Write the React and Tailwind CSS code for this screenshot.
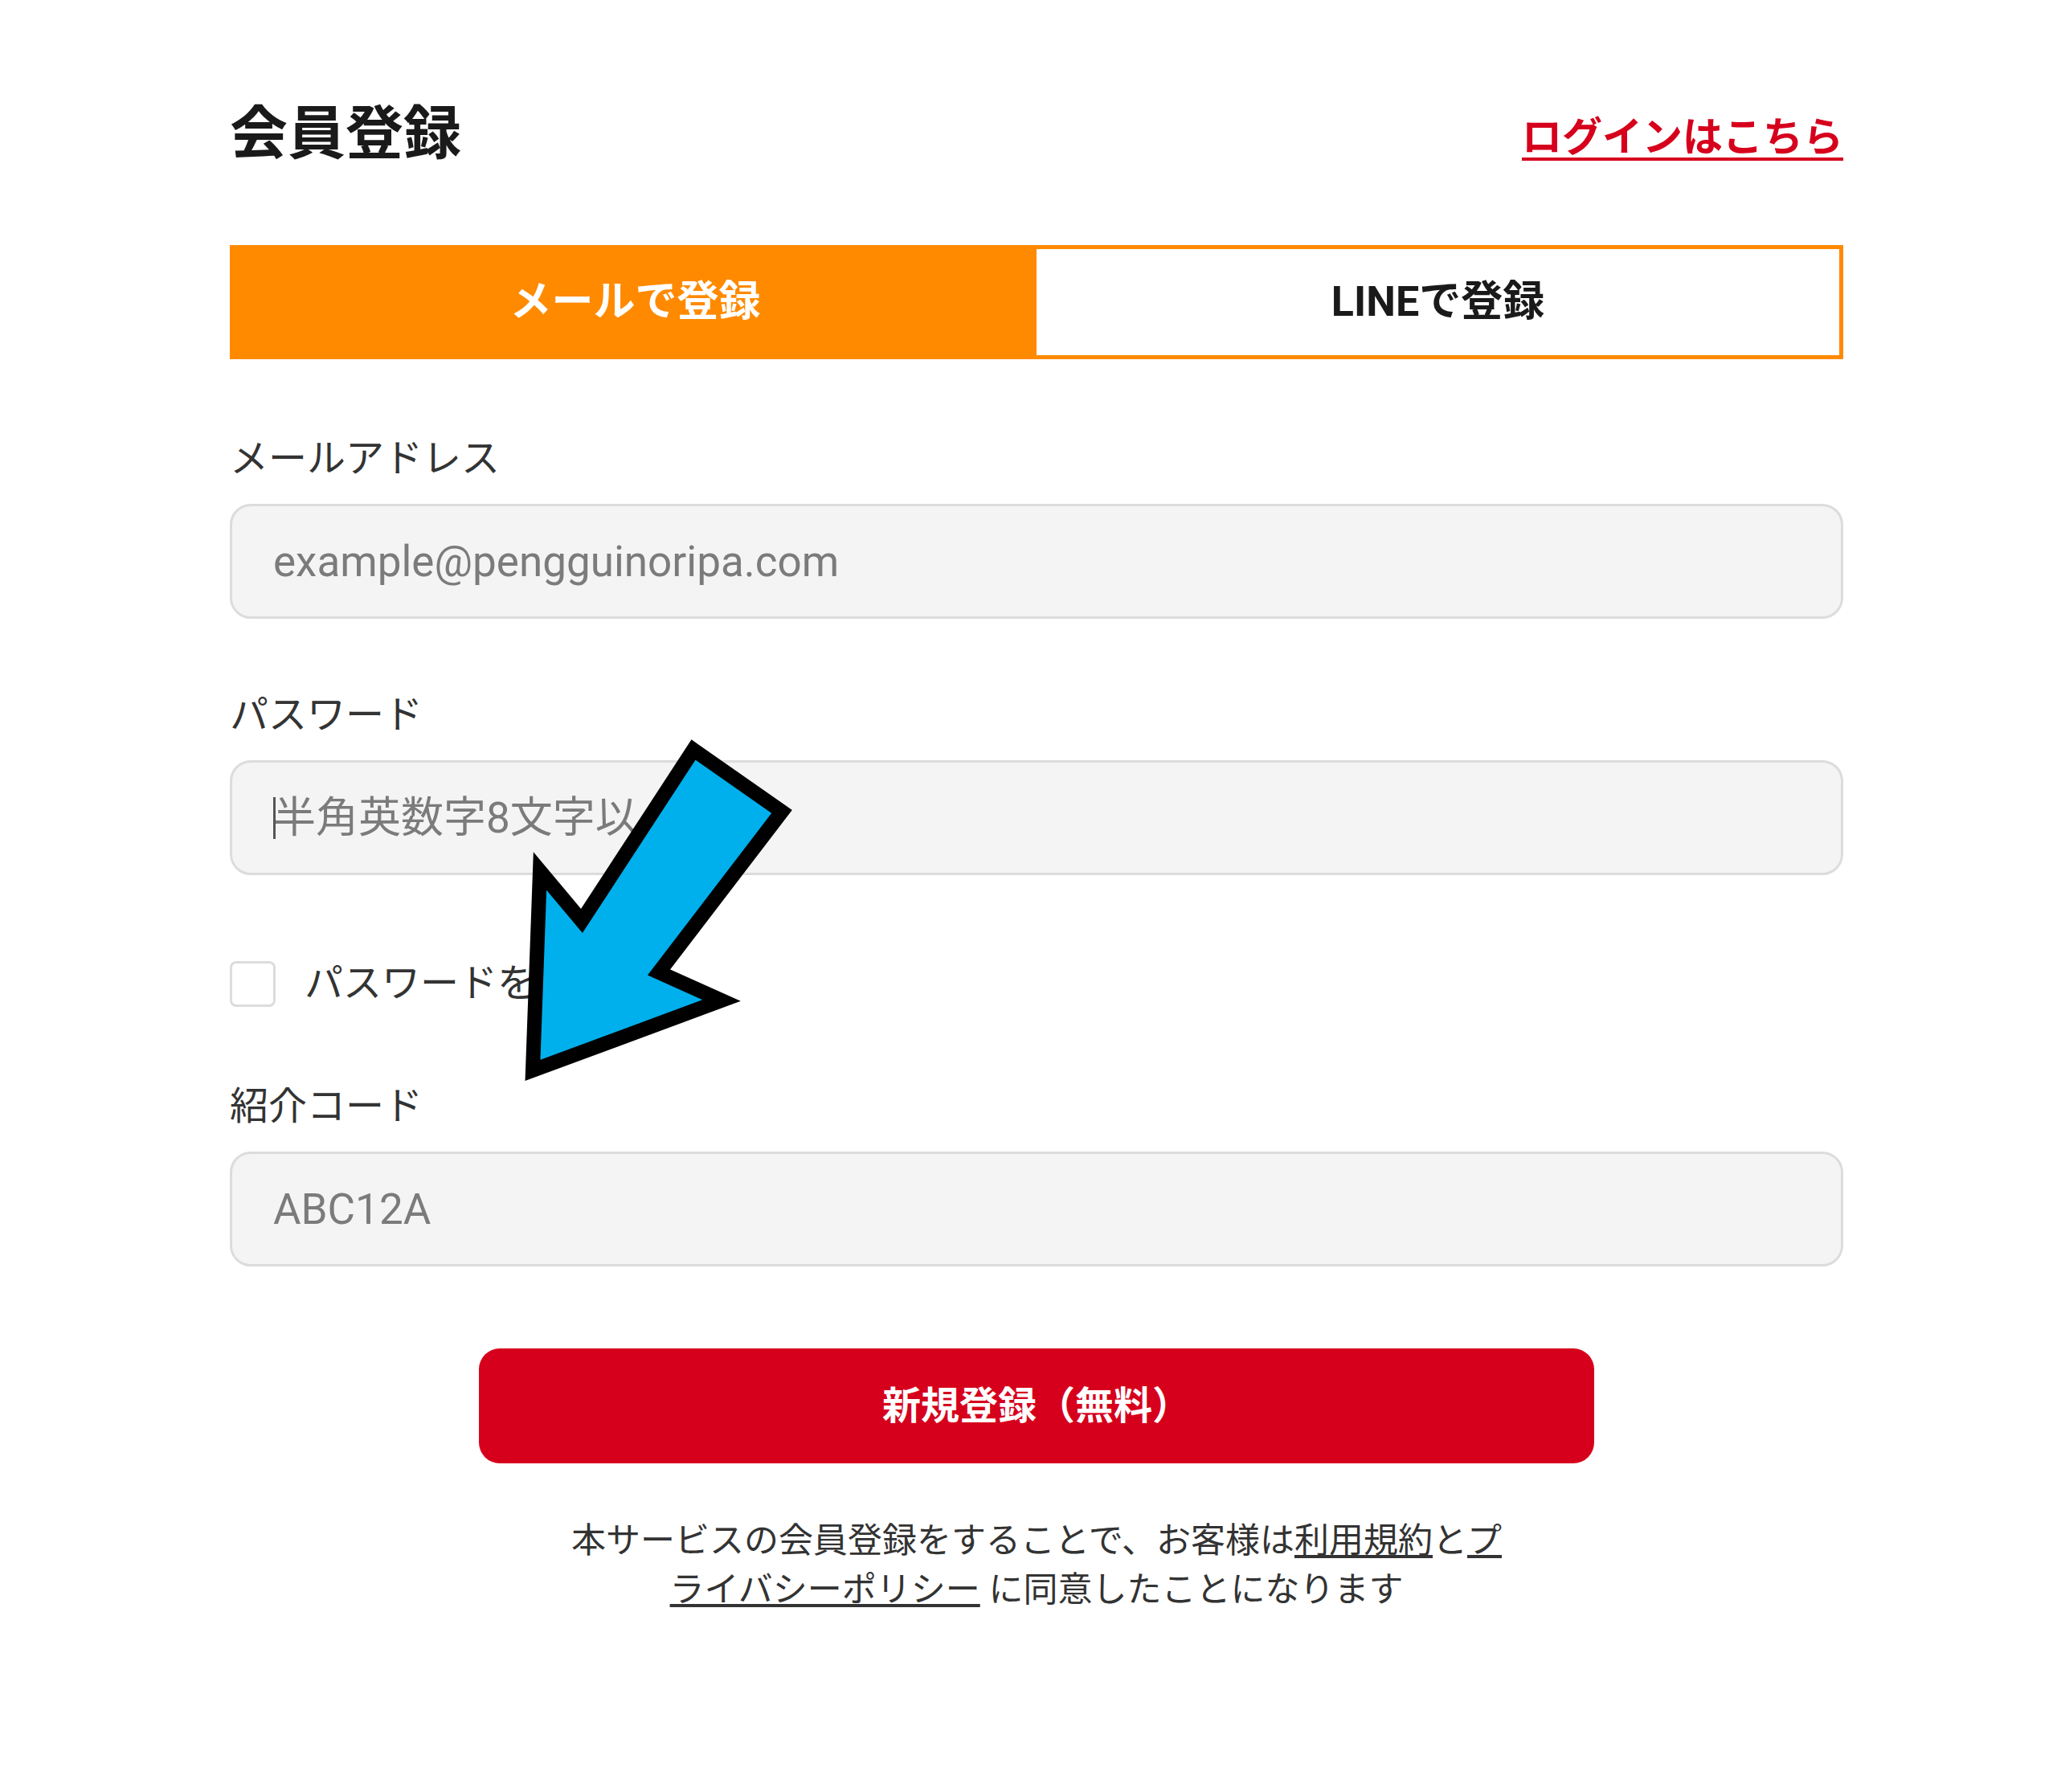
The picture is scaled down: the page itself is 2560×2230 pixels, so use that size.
import React from 'react';

const Field = ({ label, placeholder, type = 'text', caret = false }) => (
  <div className="flex flex-col">
    <label className="text-[48px] leading-[72px] text-[#333333]">{label}</label>
    <div className="relative mt-[20px]">
      <input
        type={type}
        placeholder={placeholder}
        className="w-full h-[143px] rounded-[26px] border-[3px] border-[#dcdcdc] bg-[#f4f4f4] px-[51px] text-[53px] text-[#333333] placeholder:text-[#7b7b7b] outline-none"
      />
      {caret && <span className="absolute left-[54px] top-[46px] w-[3px] h-[52px] bg-[#555555]" />}
    </div>
  </div>
);

const Arrow = () => (
  <svg
    className="absolute left-[630px] top-[900px] pointer-events-none"
    width="380"
    height="460"
    viewBox="0 0 380 460"
  >
    <polygon
      points="233,33 343,110 190,310 268,345 33,432 42,184 94,246"
      fill="#00b0ec"
      stroke="#000000"
      strokeWidth="18"
      strokeLinejoin="miter"
      strokeMiterlimit="4"
    />
  </svg>
);

export default function App() {
  return (
    <div className="relative min-h-[2230px] bg-white font-['Roboto','Noto_Sans_CJK_JP',sans-serif]">
      <div className="ml-[286px] w-[2008px] pt-[131px] flex flex-col">
        <div className="flex items-center justify-between h-[72px]">
          <h1 className="text-[72px] leading-none font-bold text-[#1a1a1a]">会員登録</h1>
          <a href="#" className="text-[50px] leading-none font-bold text-[#d6001c] underline underline-offset-[8px] decoration-[4px] mt-[8px]">
            ログインはこちら
          </a>
        </div>

        <div className="mt-[102px] flex h-[142px] border-[5px] border-[#ff8a00]">
          <button className="flex-1 bg-[#ff8a00] text-white text-[52px] font-bold">メールで登録</button>
          <button className="flex-1 bg-white text-[#1a1a1a] text-[52px] font-bold">LINEで登録</button>
        </div>

        <div className="mt-[88px]">
          <Field label="メールアドレス" placeholder="example@pengguinoripa.com" type="email" />
        </div>
        <div className="mt-[84px]">
          <Field label="パスワード" placeholder="半角英数字8文字以上" type="password" caret />
        </div>

        <label className="mt-[100px] flex items-center gap-[36px] h-[70px]">
          <span className="w-[57px] h-[57px] rounded-[8px] border-[3px] border-[#dcdcdc] bg-white" />
          <span className="text-[48px] text-[#333333]">パスワードを表示</span>
        </label>

        <div className="mt-[82px]">
          <Field label="紹介コード" placeholder="ABC12A" />
        </div>

        <button className="mt-[102px] self-center w-[1388px] h-[143px] rounded-[26px] bg-[#d6001c] text-white text-[48px] font-bold">
          新規登録（無料）
        </button>

        <p className="mt-[66px] self-center w-[1180px] text-center text-[43px] leading-[61px] text-[#333333]">
          本サービスの会員登録をすることで、お客様は<a href="#" className="underline">利用規約</a>と<a href="#" className="underline">プライバシーポリシー</a> に同意したことになります
        </p>
      </div>
      <Arrow />
    </div>
  );
}
